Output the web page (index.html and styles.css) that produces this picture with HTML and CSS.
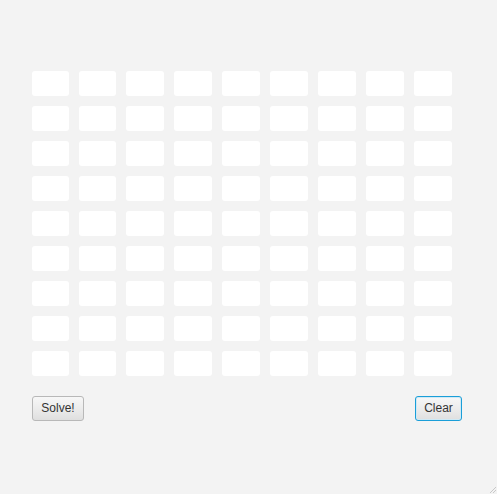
FILE: index.html
```html
<!DOCTYPE html>
<html lang="en">
<head>
<meta charset="utf-8">
<title>Sudoku Solver</title>
<link rel="stylesheet" href="styles.css">
</head>
<body>
<main class="window">
  <div class="board">
    <div class="cell"></div><div class="cell"></div><div class="cell"></div><div class="cell"></div><div class="cell"></div><div class="cell"></div><div class="cell"></div><div class="cell"></div><div class="cell"></div>
    <div class="cell"></div><div class="cell"></div><div class="cell"></div><div class="cell"></div><div class="cell"></div><div class="cell"></div><div class="cell"></div><div class="cell"></div><div class="cell"></div>
    <div class="cell"></div><div class="cell"></div><div class="cell"></div><div class="cell"></div><div class="cell"></div><div class="cell"></div><div class="cell"></div><div class="cell"></div><div class="cell"></div>
    <div class="cell"></div><div class="cell"></div><div class="cell"></div><div class="cell"></div><div class="cell"></div><div class="cell"></div><div class="cell"></div><div class="cell"></div><div class="cell"></div>
    <div class="cell"></div><div class="cell"></div><div class="cell"></div><div class="cell"></div><div class="cell"></div><div class="cell"></div><div class="cell"></div><div class="cell"></div><div class="cell"></div>
    <div class="cell"></div><div class="cell"></div><div class="cell"></div><div class="cell"></div><div class="cell"></div><div class="cell"></div><div class="cell"></div><div class="cell"></div><div class="cell"></div>
    <div class="cell"></div><div class="cell"></div><div class="cell"></div><div class="cell"></div><div class="cell"></div><div class="cell"></div><div class="cell"></div><div class="cell"></div><div class="cell"></div>
    <div class="cell"></div><div class="cell"></div><div class="cell"></div><div class="cell"></div><div class="cell"></div><div class="cell"></div><div class="cell"></div><div class="cell"></div><div class="cell"></div>
    <div class="cell"></div><div class="cell"></div><div class="cell"></div><div class="cell"></div><div class="cell"></div><div class="cell"></div><div class="cell"></div><div class="cell"></div><div class="cell"></div>
  </div>
  <div class="actions">
    <button class="btn btn-solve" type="button">Solve!</button>
    <button class="btn btn-clear is-focused" type="button">Clear</button>
  </div>
  <svg class="grip" width="8" height="8" viewBox="0 0 8 8" aria-hidden="true">
    <path d="M8 2 L2 8 M8 5 L5 8" stroke="#c8c8c8" stroke-width="1" fill="none"/>
  </svg>
</main>
</body>
</html>
```
FILE: styles.css
```css
html, body {
  margin: 0;
  padding: 0;
  background: #f3f3f3;
}

.window {
  position: relative;
  width: 497px;
  height: 494px;
  box-sizing: border-box;
  padding: 71px 35px 0 32px;
  font-family: "Liberation Sans", Arial, sans-serif;
  font-size: 12px;
  color: #333333;
}

.board {
  display: grid;
  grid-template-columns: 37px 37px repeat(7, 38px);
  grid-auto-rows: 25px;
  column-gap: 10px;
  row-gap: 10px;
}

.cell {
  background: #ffffff;
  border-radius: 3px;
}

.actions {
  display: flex;
  justify-content: space-between;
  align-items: center;
  margin-top: 20px;
}

.btn {
  box-sizing: border-box;
  height: 25px;
  padding: 0 0;
  border: 1px solid #b8b8b8;
  border-radius: 3px;
  background: linear-gradient(to bottom, #f7f7f7 0%, #ececec 50%, #dfdfdf 100%);
  font-family: "Liberation Sans", Arial, sans-serif;
  font-size: 12px;
  color: #333333;
  line-height: 23px;
  text-align: center;
}

.btn-solve {
  width: 52px;
}

.btn-clear {
  width: 47px;
}

.is-focused {
  border-color: #1a9ed8;
  box-shadow: inset 0 0 0 1px #cfe9f5;
}

.grip {
  position: absolute;
  right: 1px;
  bottom: 1px;
}
```
